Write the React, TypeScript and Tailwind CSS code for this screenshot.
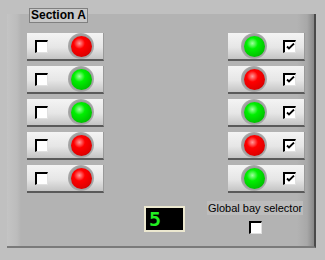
import React from "react";

const Led = ({ on }: { on: boolean }) => (
  <div className="w-[26px] h-[26px] rounded-full flex items-center justify-center bg-[radial-gradient(circle,#9a9a9a_55%,#c8c8c8_100%)]">
    <div
      className={
        on
          ? "w-[21px] h-[21px] rounded-full bg-[radial-gradient(circle_at_40%_35%,#a0ffa0_0%,#00f000_30%,#00c000_75%,#006000_100%)]"
          : "w-[21px] h-[21px] rounded-full bg-[radial-gradient(circle_at_40%_35%,#ff9a9a_0%,#ff0000_30%,#e00000_70%,#600000_100%)]"
      }
    />
  </div>
);

const Check = ({ checked }: { checked: boolean }) => (
  <div className="w-[13px] h-[13px] bg-white border-t-2 border-l-2 border-black border-r border-b border-r-[#e0e0e0] border-b-[#e0e0e0] flex items-center justify-center">
    {checked && (
      <svg width="9" height="8" viewBox="0 0 9 8">
        <path d="M1 3.5 L3 5.5 L8 0.5" stroke="black" strokeWidth="1.8" fill="none" />
      </svg>
    )}
  </div>
);

const Btn = ({ on, checked, right }: { on: boolean; checked: boolean; right?: boolean }) => (
  <div className="w-[77px] h-[28px] bg-[linear-gradient(#f4f4f4,#e6e6e6_55%,#c4c4c4)] border-b-2 border-b-[#5a5a5a] border-r border-r-[#9a9a9a] flex items-center">
    {right ? (
      <>
        <div className="ml-[13px]"><Led on={on} /></div>
        <div className="ml-[16px]"><Check checked={checked} /></div>
      </>
    ) : (
      <>
        <div className="ml-[8px]"><Check checked={checked} /></div>
        <div className="ml-[20px]"><Led on={on} /></div>
      </>
    )}
  </div>
);

export default function App() {
  const left = [false, true, true, false, false];
  const right = [true, false, true, false, true];
  return (
    <div className="w-[325px] h-[260px] bg-[#c0c0c0] pt-[14px] pl-[7px]" style={{ fontFamily: "Arial, 'Liberation Sans', sans-serif" }}>
      <div className="relative w-[309px] h-[234px] bg-[#b3b3b3] border-r-2 border-r-[#4a4a4a] border-b-2 border-b-[#7a7a7a] bg-[linear-gradient(90deg,#c4c4c4_0px,#bcbcbc_10px,#b3b3b3_14px,#b3b3b3_290px,#a8a8a8_300px,#888888_307px)]">
        <div className="absolute left-[22px] top-[-6px] h-[15px] px-[1px] bg-[#c8c8c8] border border-[#808080] text-[12px] font-bold leading-[13px] text-black">
          Section A
        </div>
        <div className="flex justify-between pl-[20px] pr-[9px] pt-[19px]">
          <div className="flex flex-col gap-[5px]">
            {left.map((on, i) => (
              <Btn key={i} on={on} checked={false} />
            ))}
          </div>
          <div className="flex flex-col gap-[5px]">
            {right.map((on, i) => (
              <Btn key={i} on={on} checked={true} right />
            ))}
          </div>
        </div>
        <div className="flex mt-[8px]">
          <div className="ml-[137px] mt-[5px] w-[41px] h-[26px] bg-black border-2 border-[#ece8d0] flex items-center pl-[3px]">
            <span className="text-[#22ee22] text-[20px] font-bold leading-none" style={{ fontFamily: "'DejaVu Sans Mono', monospace" }}>5</span>
          </div>
          <div className="ml-[22px] flex flex-col items-center">
            <div className="bg-[#bcbcbc] text-[11px] leading-[14px] px-[1px] text-black">Global bay selector</div>
            <div className="mt-[6px]"><Check checked={false} /></div>
          </div>
        </div>
      </div>
    </div>
  );
}
